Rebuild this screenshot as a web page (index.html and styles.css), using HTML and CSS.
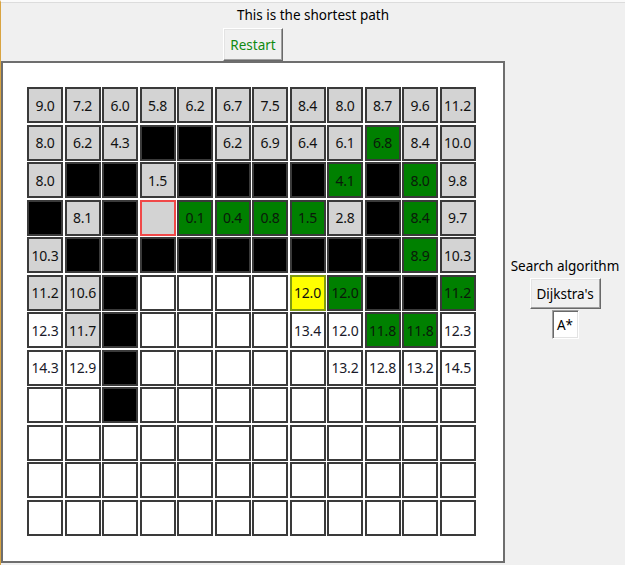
FILE: index.html
```html
<!DOCTYPE html>
<html>
<head>
<meta charset="utf-8">
<link rel="stylesheet" href="styles.css">
</head>
<body>
<div class="window">
  <div class="title">This is the shortest path</div>
  <div class="restart-row"><button class="btn raised restart">Restart</button></div>
  <div class="canvas-frame">
    <div class="grid">
      <div class="c g">9.0</div><div class="c g">7.2</div><div class="c g">6.0</div><div class="c g">5.8</div><div class="c g">6.2</div><div class="c g">6.7</div><div class="c g">7.5</div><div class="c g">8.4</div><div class="c g">8.0</div><div class="c g">8.7</div><div class="c g">9.6</div><div class="c g">11.2</div>
      <div class="c g">8.0</div><div class="c g">6.2</div><div class="c g">4.3</div><div class="c k"></div><div class="c k"></div><div class="c g">6.2</div><div class="c g">6.9</div><div class="c g">6.4</div><div class="c g">6.1</div><div class="c n">6.8</div><div class="c g">8.4</div><div class="c g">10.0</div>
      <div class="c g">8.0</div><div class="c k"></div><div class="c k"></div><div class="c g">1.5</div><div class="c k"></div><div class="c k"></div><div class="c k"></div><div class="c k"></div><div class="c n">4.1</div><div class="c k"></div><div class="c n">8.0</div><div class="c g">9.8</div>
      <div class="c k"></div><div class="c g">8.1</div><div class="c k"></div><div class="c s"></div><div class="c n">0.1</div><div class="c n">0.4</div><div class="c n">0.8</div><div class="c n">1.5</div><div class="c g">2.8</div><div class="c k"></div><div class="c n">8.4</div><div class="c g">9.7</div>
      <div class="c g">10.3</div><div class="c k"></div><div class="c k"></div><div class="c k"></div><div class="c k"></div><div class="c k"></div><div class="c k"></div><div class="c k"></div><div class="c k"></div><div class="c k"></div><div class="c n">8.9</div><div class="c g">10.3</div>
      <div class="c g">11.2</div><div class="c g">10.6</div><div class="c k"></div><div class="c w"></div><div class="c w"></div><div class="c w"></div><div class="c w"></div><div class="c y">12.0</div><div class="c n">12.0</div><div class="c k"></div><div class="c k"></div><div class="c n">11.2</div>
      <div class="c w">12.3</div><div class="c g">11.7</div><div class="c k"></div><div class="c w"></div><div class="c w"></div><div class="c w"></div><div class="c w"></div><div class="c w">13.4</div><div class="c w">12.0</div><div class="c n">11.8</div><div class="c n">11.8</div><div class="c w">12.3</div>
      <div class="c w">14.3</div><div class="c w">12.9</div><div class="c k"></div><div class="c w"></div><div class="c w"></div><div class="c w"></div><div class="c w"></div><div class="c w"></div><div class="c w">13.2</div><div class="c w">12.8</div><div class="c w">13.2</div><div class="c w">14.5</div>
      <div class="c w"></div><div class="c w"></div><div class="c k"></div><div class="c w"></div><div class="c w"></div><div class="c w"></div><div class="c w"></div><div class="c w"></div><div class="c w"></div><div class="c w"></div><div class="c w"></div><div class="c w"></div>
      <div class="c w"></div><div class="c w"></div><div class="c w"></div><div class="c w"></div><div class="c w"></div><div class="c w"></div><div class="c w"></div><div class="c w"></div><div class="c w"></div><div class="c w"></div><div class="c w"></div><div class="c w"></div>
      <div class="c w"></div><div class="c w"></div><div class="c w"></div><div class="c w"></div><div class="c w"></div><div class="c w"></div><div class="c w"></div><div class="c w"></div><div class="c w"></div><div class="c w"></div><div class="c w"></div><div class="c w"></div>
      <div class="c w"></div><div class="c w"></div><div class="c w"></div><div class="c w"></div><div class="c w"></div><div class="c w"></div><div class="c w"></div><div class="c w"></div><div class="c w"></div><div class="c w"></div><div class="c w"></div><div class="c w"></div>
    </div>
  </div>
  <div class="side">
    <div class="side-label">Search algorithm</div>
    <button class="btn raised dijkstra">Dijkstra's</button>
    <button class="btn sunken astar">A*</button>
  </div>
</div>
</body>
</html>
```
FILE: styles.css
```css
html, body {
  margin: 0;
  padding: 0;
}
body {
  width: 625px;
  height: 565px;
  overflow: hidden;
  background: #f0f0f0;
  font-family: "Noto Sans", "Open Sans", sans-serif;
  font-size: 13.5px;
  color: #000;
}
.window {
  box-sizing: border-box;
  height: 565px;
  border-left: 1px solid #d9a441;
  border-top: 2px solid #fafafa;
  display: grid;
  grid-template-columns: 504px 1fr;
  grid-template-rows: 26px 33px 502px;
}
.title {
  grid-column: 1 / 3;
  border-top: 1px solid #dcdcdc;
  text-align: center;
  line-height: 24px;
}
.restart-row {
  grid-column: 1;
  display: flex;
  justify-content: center;
}
.btn {
  font-family: inherit;
  font-size: 13.5px;
  background: #f0f0f0;
  margin: 0;
  padding: 0;
  box-sizing: border-box;
  color: #000;
}
.raised {
  border: 1px solid;
  border-color: #ffffff #696969 #696969 #ffffff;
  box-shadow: inset -1px -1px 0 #a0a0a0, inset 1px 1px 0 #e3e3e3;
}
.sunken {
  border: 1px solid;
  border-color: #a0a0a0 #ffffff #ffffff #a0a0a0;
  box-shadow: inset 1px 1px 0 #696969, inset -1px -1px 0 #e3e3e3;
  background: #ffffff;
}
.restart {
  width: 60px;
  height: 33px;
  color: #108a10;
}
.canvas-frame {
  grid-column: 1;
  box-sizing: border-box;
  border: 2px solid #6e6e6e;
  background: #ffffff;
  padding: 24px 0 0 24px;
}
.grid {
  display: grid;
  grid-template-columns: repeat(12, 36px);
  grid-auto-rows: 36px;
  gap: 1.5px;
}
.c {
  box-sizing: border-box;
  border: 2px solid #3a3a3a;
  display: flex;
  align-items: center;
  justify-content: center;
  font-size: 14px;
  letter-spacing: -0.2px;
  color: #111;
}
.g { background: #d3d3d3; }
.k { background: #000000; }
.n { background: #008000; color: #0a1a0a; }
.w { background: #ffffff; color: #1a1a2a; }
.y { background: #ffff00; border-color: #7f9a12; }
.s { background: #d3d3d3; border-color: #f04848; }
.side {
  grid-column: 2;
  display: flex;
  flex-direction: column;
  align-items: center;
  padding-top: 195px;
}
.side-label {
  height: 22px;
  line-height: 20px;
  white-space: nowrap;
}
.dijkstra {
  width: 71px;
  height: 31px;
  margin-bottom: 1px;
}
.astar {
  width: 27px;
  height: 29px;
}
```
